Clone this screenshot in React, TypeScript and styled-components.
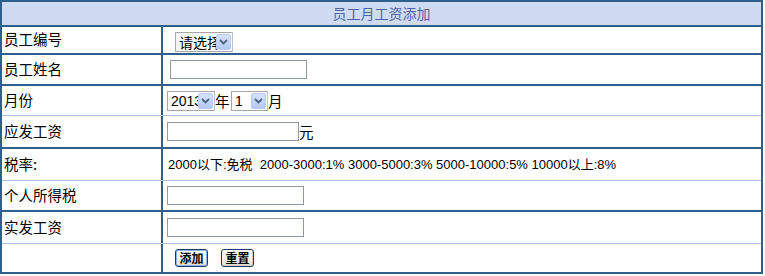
import styled, { createGlobalStyle } from 'styled-components'

const GlobalStyle = createGlobalStyle`
  html, body {
    margin: 0;
    padding: 0;
    background: #ffffff;
  }
  body {
    font-family: "Liberation Sans", "Noto Sans CJK SC", sans-serif;
    font-size: 13px;
    color: #000000;
  }
`

const DARK = '#2f5f8c'
const LIGHT = '#a8c5df'

type RowSpec = {
  label: string
  height: number
  line: 'dark' | 'light' | 'none'
}

const rows: RowSpec[] = [
  { label: '员工编号', height: 28, line: 'dark' },
  { label: '员工姓名', height: 31, line: 'dark' },
  { label: '月份', height: 30, line: 'light' },
  { label: '应发工资', height: 33, line: 'dark' },
  { label: '税率:', height: 32, line: 'light' },
  { label: '个人所得税', height: 31, line: 'dark' },
  { label: '实发工资', height: 32, line: 'light' },
  { label: '', height: 28, line: 'none' },
]

function ArrowButton() {
  return (
    <Arrow>
      <svg width="9" height="6" viewBox="0 0 9 6">
        <path
          d="M1 1 L4.5 4.5 L8 1"
          fill="none"
          stroke="#4d6185"
          strokeWidth="1.8"
        />
      </svg>
    </Arrow>
  )
}

type SelectProps = {
  width: number
  value: string
}

function XpSelect(props: SelectProps) {
  return (
    <SelectBox $width={props.width}>
      <SelectText>{props.value}</SelectText>
      <ArrowButton />
    </SelectBox>
  )
}

function renderValue(index: number) {
  switch (index) {
    case 0:
      return (
        <ValueCell $indent={12} $shift={2}>
          <XpSelect width={58} value="请选择" />
        </ValueCell>
      )
    case 1:
      return (
        <ValueCell $indent={7}>
          <TextInput $width={137} type="text" />
        </ValueCell>
      )
    case 2:
      return (
        <ValueCell $indent={4}>
          <XpSelect width={48} value="2013" />
          <Unit $gap={16}>年</Unit>
          <XpSelect width={37} value="1" />
          <Unit>月</Unit>
        </ValueCell>
      )
    case 3:
      return (
        <ValueCell $indent={4}>
          <TextInput $width={132} type="text" />
          <Unit>元</Unit>
        </ValueCell>
      )
    case 4:
      return (
        <ValueCell $indent={5}>
          <TaxText>
            2000以下:免税&nbsp;&nbsp;2000-3000:1% 3000-5000:3% 5000-10000:5%
            10000以上:8%
          </TaxText>
        </ValueCell>
      )
    case 5:
    case 6:
      return (
        <ValueCell $indent={4}>
          <TextInput $width={137} type="text" />
        </ValueCell>
      )
    default:
      return (
        <ValueCell $indent={12}>
          <XpButton $focused>添加</XpButton>
          <XpButton>重置</XpButton>
        </ValueCell>
      )
  }
}

export default function App() {
  return (
    <>
      <GlobalStyle />
      <Frame>
        <Header>员工月工资添加</Header>
        {rows.map((row, i) => (
          <Row key={i} $height={row.height} $line={row.line}>
            <LabelCell>{row.label}</LabelCell>
            {renderValue(i)}
          </Row>
        ))}
      </Frame>
    </>
  )
}

const Frame = styled.div`
  width: 763px;
  box-sizing: border-box;
  border: 2px solid ${DARK};
  display: flex;
  flex-direction: column;
`

const Header = styled.div`
  height: 25px;
  box-sizing: border-box;
  border-bottom: 2px solid ${DARK};
  background: #cfdbf2;
  color: #5263a8;
  font-family: "Noto Sans CJK SC", sans-serif;
  font-size: 14px;
  display: flex;
  align-items: center;
  justify-content: center;
  padding-bottom: 1px;
`

const Row = styled.div<{ $height: number; $line: 'dark' | 'light' | 'none' }>`
  height: ${(p) => p.$height}px;
  box-sizing: border-box;
  display: flex;
  border-bottom: ${(p) =>
    p.$line === 'dark'
      ? `2px solid ${DARK}`
      : p.$line === 'light'
        ? `1px solid ${LIGHT}`
        : 'none'};
`

const LabelCell = styled.div`
  width: 161px;
  flex: none;
  box-sizing: border-box;
  border-right: 2px solid ${DARK};
  padding: 0 0 3px 2px;
  display: flex;
  align-items: center;
  font-family: "Noto Sans CJK SC", sans-serif;
  font-size: 14.5px;
`

const ValueCell = styled.div<{ $indent: number; $shift?: number }>`
  flex: 1;
  display: flex;
  align-items: center;
  padding-left: ${(p) => p.$indent}px;
  padding-top: ${(p) => (p.$shift ?? 0) * 2}px;
`

const SelectBox = styled.span<{ $width: number }>`
  position: relative;
  display: inline-flex;
  align-items: center;
  width: ${(p) => p.$width}px;
  height: 20px;
  box-sizing: border-box;
  border: 1px solid #a7a6aa;
  border-right-color: #b8c4d4;
  background: #ffffff;
  overflow: hidden;
`

const SelectText = styled.span`
  padding-left: 3px;
  font-family: "Liberation Sans", "Noto Sans CJK SC", sans-serif;
  font-size: 14px;
  white-space: nowrap;
`

const Arrow = styled.span`
  position: absolute;
  right: 1px;
  top: 1px;
  bottom: 1px;
  width: 15px;
  box-sizing: border-box;
  border: 1px solid #b9cbf3;
  border-radius: 2px;
  background: linear-gradient(#d6e2fd, #b3c8f6);
  display: flex;
  align-items: center;
  justify-content: center;
`

const Unit = styled.span<{ $gap?: number }>`
  font-family: "Noto Sans CJK SC", sans-serif;
  font-size: 14.5px;
  width: ${(p) => p.$gap ?? 14}px;
  text-align: left;
`

const TextInput = styled.input<{ $width: number }>`
  width: ${(p) => p.$width}px;
  height: 19px;
  box-sizing: border-box;
  border: 1px solid #8f9ba7;
  margin: 0;
  padding: 0 2px;
  outline: none;
  background: #ffffff;
`

const TaxText = styled.span`
  font-size: 13px;
  white-space: nowrap;
  padding-bottom: 2px;
`

const XpButton = styled.button<{ $focused?: boolean }>`
  width: 33px;
  height: 18px;
  margin: 0 13px 0 0;
  padding: 0;
  box-sizing: border-box;
  border: 1px solid #1c3a6a;
  border-radius: 3px;
  background: linear-gradient(#ffffff, #f1efe6 70%, #dcd8c8);
  box-shadow: ${(p) =>
    p.$focused ? 'inset 0 0 0 1px #8fb2ee' : 'inset -1px -1px 0 #d0cdbf'};
  font-family: "Noto Sans CJK SC", sans-serif;
  font-size: 12px;
  font-weight: 700;
  line-height: 14px;
  color: #000000;
`
